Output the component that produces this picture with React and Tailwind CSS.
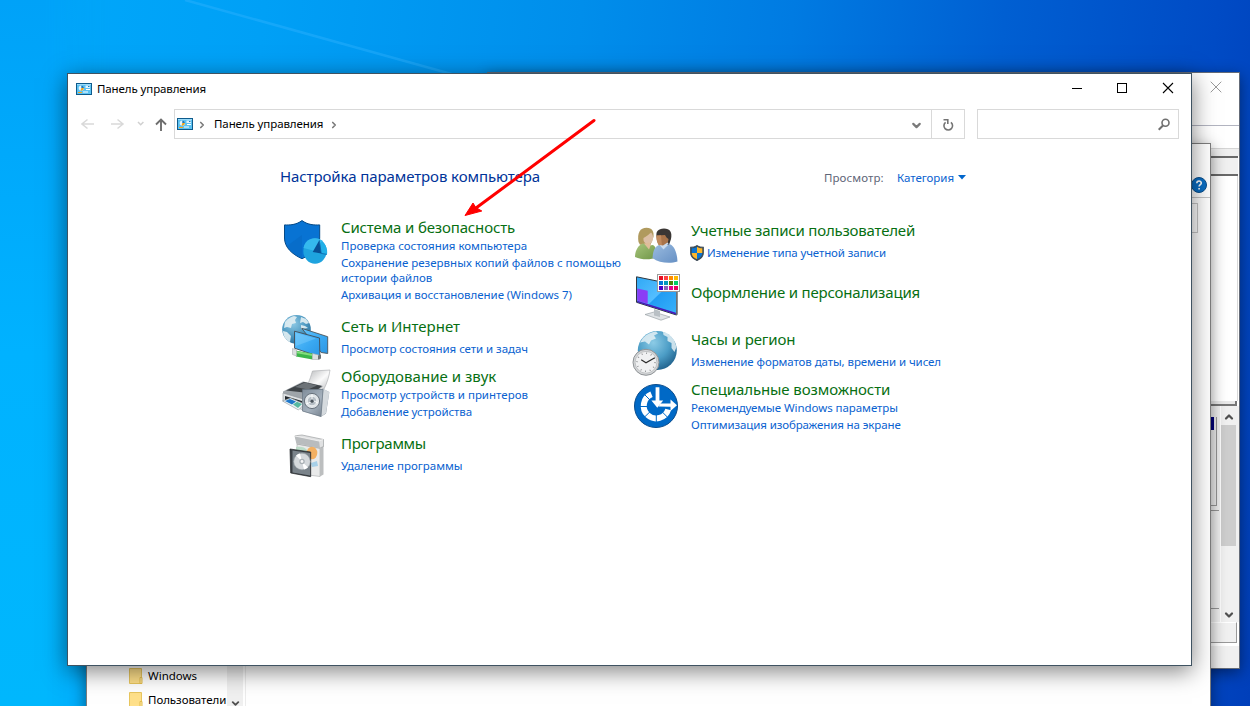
import { ChevronDown, ChevronUp, ChevronRight } from "lucide-react";

function PanelGlyph() {
  return (
    <svg width="16" height="12" viewBox="0 0 16 12" className="shrink-0">
      <rect x=".5" y=".5" width="15" height="11" fill="#5cc2f2" stroke="#0e5b8c" />
      <path d="M1 1h14v1H1z" fill="#9bdcfa" />
      <circle cx="5.300" cy="5" r="2.600" fill="#e8f6fd" />
      <path d="M5.300 5V2.400A2.600 2.600 0 0 1 7.900 5z" fill="#1878c0" />
      <path d="M5.300 5H7.900A2.600 2.600 0 0 1 4.500 7.500z" fill="#f2a41f" />
      <path d="M9.500 2.500h4.500v2.500h-4.500z" fill="#dff2fc" />
      <path d="M12 3h1.500v1H12z" fill="#1878c0" />
      <path d="M10 6h4v1h-4zM7 8.500h5v1H7z" fill="#fff" />
      <path d="M2 9h4v1H2z" fill="#f5a623" />
    </svg>
  );
}

function SecurityIcon() {
  return (
    <svg width="48" height="48" viewBox="0 0 48 48">
      <path d="M21 2.6C15 6.9 9 7.2 3.5 6.9V20c0 9 7 16 17.5 20.7C31.5 36 38.7 29 38.7 20V6.9C33 7.2 27 6.9 21 2.6z" fill="#0873d3" stroke="#074a86" strokeWidth="1" />
      <path d="M6 28c3.5 5.500 8.500 9.500 15 12.700V17z" fill="#0667c2" opacity=".5" />
      <ellipse cx="34" cy="33" rx="11.700" ry="12.700" fill="#1ea3df" />
      <path d="M22.500 30c1-6 5.500-9.700 11.500-9.700 3 0 5.500 1 7.500 3L34 33z" fill="#35b9ee" />
      <path d="M40.500 23.500L34 34.500l12 2c.8-5-1-10-5.500-13z" fill="#22b0e8" />
      <path d="M38.300 22.300L31.700 34l8.500 1.400z" fill="#084f96" />
      <path d="M38.300 22.300L40.200 35.400l5.700 1" fill="none" stroke="#0a64a8" strokeWidth=".8" />
    </svg>
  );
}

function NetworkIcon() {
  return (
    <svg width="48" height="48" viewBox="0 0 48 48">
      <defs>
        <radialGradient id="netGlobe" cx=".4" cy=".3" r=".75">
          <stop offset="0" stopColor="#8cc8e4" />
          <stop offset=".6" stopColor="#4a96bf" />
          <stop offset="1" stopColor="#2c6c95" />
        </radialGradient>
        <linearGradient id="netScreen" x1="0" y1="0" x2="1" y2="1">
          <stop offset="0" stopColor="#62c2fa" />
          <stop offset=".55" stopColor="#3aa9f2" />
          <stop offset="1" stopColor="#2b96e5" />
        </linearGradient>
      </defs>
      <circle cx="15.500" cy="15.300" r="14.300" fill="url(#netGlobe)" />
      <path d="M4 8c3-4 6-5 9-6l3 1-2 3 1 3-4 1-1 4-4-1-3 1zM2 17l4 1 4 4-1 6C5 26 2 22 2 17zM20 3l5 2 3 4-3 1-3-2-3 1zM20 11l4 1 3 2-7 1z" fill="#e3eff3" opacity=".9" />
      <path d="M20.700 14.300L46.700 22.700V39.500l-6.500-1z" fill="url(#netScreen)" stroke="#4b5358" strokeWidth=".9" />
      <path d="M13.500 17.200l25 6.800.4 18.800-25.400-8.600z" fill="url(#netScreen)" stroke="#454c52" strokeWidth=".9" />
      <path d="M15 19l20 5.500L15 32z" fill="#90d8ff" opacity=".35" />
      <path d="M14 36.500l17.500 3v6L15 42.500z" fill="#3bb54a" />
      <path d="M14.500 37l17 3v2l-17-3z" fill="#83dc7c" />
      <path d="M11.500 34.500l4 1.500v6l-4-1.500zM31.500 39.500l6 1.500c2 .5 2.500 3 1 4.500l-7 0z" fill="#dce0e0" stroke="#a9afb1" strokeWidth=".6" />
      <path d="M37 41.500l3-1v4l-3 1z" fill="#6b7174" />
    </svg>
  );
}

function HardwareIcon() {
  return (
    <svg width="50" height="50" viewBox="0 0 50 50">
      <defs>
        <linearGradient id="hwPaper" x1="0" y1="0" x2="1" y2="1">
          <stop offset="0" stopColor="#b8babc" />
          <stop offset=".55" stopColor="#fbfbfb" />
          <stop offset="1" stopColor="#c0c2c4" />
        </linearGradient>
        <linearGradient id="hwBox" x1="0" y1="0" x2="1" y2="1">
          <stop offset="0" stopColor="#7f8c99" />
          <stop offset=".5" stopColor="#a5b1bd" />
          <stop offset="1" stopColor="#66727f" />
        </linearGradient>
      </defs>
      <path d="M27 14.500c2-4 3-8 4.500-12.500L49 1c-1 7-3 13-6 19z" fill="url(#hwPaper)" stroke="#a8aaac" strokeWidth=".6" />
      <path d="M2 22.500l20-10 20 4.500-9 9-12 9L2 26z" fill="#9fa5aa" />
      <path d="M5 21.500l18-8.500 18 4-9 7.500z" fill="#3f4448" />
      <path d="M14 18l10-4.500 12 3-9 4z" fill="#6d7378" />
      <path d="M2 24l20 6v11L2 32z" fill="#dfe2e4" stroke="#8c9195" strokeWidth=".6" />
      <path d="M4 27l17 5v4.500L4 31z" fill="#23282d" />
      <path d="M1.500 32l8-3 14 6-6 6z" fill="#eef2f4" stroke="#8f979c" strokeWidth=".6" />
      <path d="M4 32l5-2 6 2.600-4 3z" fill="#1f77c9" />
      <path d="M12 35.500l4-2.700 5 2.200-4 4z" fill="#58b8a0" />
      <path d="M21.500 20.500l21-.5 5.800 3-.2 2-3.100 19.500-5 3.200-18.500-5.500z" fill="url(#hwBox)" />
      <path d="M42.500 20l5.800 3.300-3.300 21-5 3.400z" fill="#d5dade" />
      <path d="M21.500 20.500h20.500l-2 27-18.500-5.500z" fill="none" stroke="#687683" strokeWidth=".7" />
      <circle cx="31" cy="32" r="7.600" fill="#dfe4e8" stroke="#69737d" />
      <circle cx="31" cy="32" r="4.800" fill="#b6bec5" stroke="#f5f7f8" strokeWidth=".8" />
      <path d="M31 25.500v5M25 35l5-2M37 34l-4-2" stroke="#fff" strokeWidth=".9" />
      <circle cx="31" cy="32.200" r="1.600" fill="#4c555d" />
    </svg>
  );
}

function ProgramsIcon() {
  return (
    <svg width="48" height="48" viewBox="0 0 48 48">
      <path d="M16 11l23 4.500V43.500l-23-3z" fill="#e9eaea" stroke="#b3b5b6" strokeWidth=".7" />
      <path d="M39 15.500l3.500-3v29l-3.500 2z" fill="#bcbebf" />
      <path d="M14 2.800l7-.8 21.500 4.500v7l-3.500 1.500-23-4-1-4z" fill="#e0e1e2" stroke="#9fa2a4" strokeWidth=".7" />
      <path d="M14 3l24 5 1 7-23-4.500z" fill="#b9bcbe" />
      <path d="M14 3l24 5 4-1.500" fill="none" stroke="#f5f5f5" strokeWidth=".8" />
      <path d="M15 14c5-1 9 0 11 3v8h-11z" fill="#bcdcc8" />
      <ellipse cx="31" cy="20" rx="5.300" ry="6.300" fill="#f3b062" />
      <path d="M30 30l6-2 1 5-6 1z" fill="#a7d0e8" />
      <path d="M9 16l20.700 3V43.700L9.700 40z" fill="#3a3f44" stroke="#22262a" strokeWidth=".7" />
      <path d="M11.500 17.500l17.500 2.500v22.500l-17.500-3z" fill="#7a838a" />
      <circle cx="21" cy="28.500" r="8.300" fill="#d5d9dc" stroke="#9ba2a7" strokeWidth=".5" />
      <path d="M21 28.500L15 22.500a8.500 8.500 0 0 1 4-2zM21 28.500l6 6a8.500 8.500 0 0 1-4 2z" fill="#fff" />
      <circle cx="21" cy="28.500" r="2.700" fill="#a9b0b5" />
      <circle cx="21" cy="28.500" r="1.400" fill="#f6f6f6" />
    </svg>
  );
}

function UsersIcon() {
  return (
    <svg width="48" height="48" viewBox="0 0 48 48">
      <defs>
        <linearGradient id="userGreen" x1="0" y1="0" x2="1" y2="1">
          <stop offset="0" stopColor="#a7c57c" />
          <stop offset="1" stopColor="#6f9547" />
        </linearGradient>
        <linearGradient id="userBlue" x1="0" y1="0" x2="1" y2="1">
          <stop offset="0" stopColor="#9bbce0" />
          <stop offset="1" stopColor="#6690c4" />
        </linearGradient>
      </defs>
      <path d="M6.500 21C5 12 8 6.800 14.500 6.800c6 0 7.500 4 7 9l-3 8H8z" fill="#b09a5e" />
      <path d="M11.500 17c2-1 6-4 7.500-5.500 1.500 1.500 2.500 4 2 6.500-.5 3-2 5-4.500 5-3.500 0-5.500-2.500-5-6z" fill="#dcbfa6" />
      <path d="M3 36c0-6 3-12 8-13.500l6 2 4-.5c3 1.500 4 7 4 12.500-7 2.500-15 2.500-22-.5z" fill="url(#userGreen)" />
      <path d="M12 22.500l5 6 2-5-1.500-2z" fill="#dfbd9a" />
      <path d="M25 17c-2-6 1-9.500 7-9.500 6 0 8.500 4 7 10.500l-2 6H27z" fill="#3a3634" />
      <path d="M24.500 14.500c3 0 6-.2 8.500-.5 1 2 2 3 3.500 4-.5 5-3 8.500-6 8.500-3.500 0-6.500-6-6-12z" fill="#a9744a" />
      <path d="M24.500 14.500c1.500 0 3 0 4.500-.2L30 26c-3-.5-6-6-5.500-11.500z" fill="#c08a5e" />
      <path d="M20.500 37c.5-6 1.500-11 6.500-13l5 3.500 5-4.500c5 1 8 8 8.500 17.500C38 43 27 42 20.500 37z" fill="url(#userBlue)" />
      <path d="M27.500 24l4 4.500 5-6-1-1-4.500 3z" fill="#c9dcf0" />
    </svg>
  );
}

function DisplayIcon() {
  return (
    <svg width="49" height="48" viewBox="0 0 49 48">
      <defs>
        <linearGradient id="dispBlue" x1="0" y1="0" x2="1" y2="1">
          <stop offset="0" stopColor="#2fa8f5" />
          <stop offset=".5" stopColor="#54beff" />
          <stop offset=".52" stopColor="#229cf3" />
          <stop offset="1" stopColor="#38b2fa" />
        </linearGradient>
      </defs>
      <path d="M13 41.500l9-2.500 16 5-9 3.200z" fill="#dfe3e6" stroke="#8f979c" strokeWidth=".6" />
      <path d="M22 36l6 2v6l-6-1.500z" fill="#b9c0c5" />
      <path d="M4.500 3.800L44.500 12v30L4.500 29.300z" fill="url(#dispBlue)" stroke="#30383f" strokeWidth="1" />
      <path d="M44 12l1.800-.5v30L44.200 42.500z" fill="#70787e" />
      <path d="M5.200 15.500l10.500 2.300v13L5.200 27.500z" fill="#8a3df5" />
      <path d="M5.200 27.800l38.700 12v1.600L5.200 29.200z" fill="#4a16b8" />
      <rect x="25.500" y="1.500" width="22" height="17" fill="#fff" stroke="#9b9b9b" />
      <path d="M27 3h4v4h-4z" fill="#e81123" /><path d="M32 3h4v4h-4z" fill="#ff4343" /><path d="M37 3h4v4h-4z" fill="#ff8c00" /><path d="M42 3h4v4h-4z" fill="#ffb900" />
      <path d="M27 8h4v4h-4z" fill="#0078d7" /><path d="M32 8h4v4h-4z" fill="#0099bc" /><path d="M37 8h4v4h-4z" fill="#498205" /><path d="M42 8h4v4h-4z" fill="#00cc6a" />
      <path d="M27 13h4v4h-4z" fill="#4a00c8" /><path d="M32 13h4v4h-4z" fill="#8764b8" /><path d="M37 13h4v4h-4z" fill="#e3008c" /><path d="M42 13h4v4h-4z" fill="#ea005e" />
    </svg>
  );
}

function ClockIcon() {
  return (
    <svg width="48" height="48" viewBox="0 0 48 48">
      <defs>
        <radialGradient id="clkGlobe" cx=".4" cy=".3" r=".75">
          <stop offset="0" stopColor="#8ccbe6" />
          <stop offset=".55" stopColor="#4c9dc6" />
          <stop offset="1" stopColor="#1f5f8a" />
        </radialGradient>
      </defs>
      <circle cx="25.300" cy="21.500" r="19.500" fill="url(#clkGlobe)" />
      <path d="M11 9c4-4 8-6 13-6.500l2 2-4 2 2 3-5 2-2 4-4-3-5 1zM31 3c4 .5 8 3.500 11 8l2.500 7-2 5-3-4v-5l-4-2 0-4-4-2z" fill="#e4f0f4" opacity=".85" />
      <circle cx="14" cy="33.300" r="13" fill="#d3d5d7" stroke="#8f9396" strokeWidth="1" />
      <circle cx="14" cy="33.300" r="10.900" fill="#f0f1f2" stroke="#b0b3b5" strokeWidth=".7" />
      <circle cx="14" cy="33.300" r="9" fill="none" stroke="#808385" strokeWidth="1.500" strokeDasharray=".8 3.912" />
      <path d="M9.200 30.800l4.800 2.900 8.800-4.900" fill="none" stroke="#2b2b2b" strokeWidth="1.200" />
    </svg>
  );
}

function AccessIcon() {
  return (
    <svg width="48" height="48" viewBox="0 0 48 48">
      <circle cx="24" cy="24" r="21.500" fill="#0069c6" stroke="#0a4c8c" strokeWidth="1" />
      <path d="M19.500 12.300A12.500 12.500 0 1 0 36.200 27.500" fill="none" stroke="#fff" strokeWidth="6" />
      <path d="M18.500 18.500L12 12M15.500 24.500H6.500M18.300 29.500L11 36.500M24.300 31v9.500M29.800 29.500l7 7" stroke="#0069c6" strokeWidth="1" />
      <path d="M24 5h4v13.500h3l-5 7.200-6.500-7.200H24z" fill="#0069c6" stroke="#0069c6" strokeWidth="2.500" />
      <path d="M23.600 5.200h3.800v13.300h3.800l-5.900 7.200-5.900-7.200h4.200z" fill="#fff" />
      <path d="M26.500 24.400l2-2.800h10v-4.200l6.500 5.800-6.500 5.800v-4.200z" fill="#fff" />
    </svg>
  );
}

function UacShield() {
  return (
    <svg width="14" height="16" viewBox="0 0 14 16" className="mr-[3px] shrink-0">
      <path d="M7 .6C5 2 2.800 2.300.7 2.300v5.500C.7 11.500 3.500 14 7 15.400c3.500-1.400 6.300-3.900 6.300-7.600V2.300C11.200 2.300 9 2 7 .6z" fill="#3b4a55" stroke="#3b4a55" strokeWidth="1.100" />
      <path d="M7 1.700C5.500 2.700 3.500 3.200 1.700 3.300V8H7z" fill="#0b74d1" />
      <path d="M7 1.700c1.500 1 3.500 1.500 5.300 1.600V8H7z" fill="#fcb72b" />
      <path d="M1.700 8H7v6.300C4 13 1.800 11 1.700 8z" fill="#fcb72b" />
      <path d="M12.300 8H7v6.300c3-1.300 5.200-3.300 5.300-6.300z" fill="#0b74d1" />
    </svg>
  );
}

const leftColumn = [
  {
    title: "Система и безопасность", track: "tracking-[-0.15px]", size: "h-[99px]", gap: "mt-px", lift: "mt-px", icon: <SecurityIcon />,
    links: [
      { text: "Проверка состояния компьютера", track: "tracking-[-0.02px]" },
      { text: "Сохранение резервных копий файлов с помощью истории файлов", track: "tracking-[0.01px]" },
      { text: "Архивация и восстановление (Windows 7)", track: "tracking-[-0.05px]" },
    ],
  },
  {
    title: "Сеть и Интернет", track: "tracking-normal", size: "h-[50px]", gap: "mt-[5px]", lift: "-mt-0.5", icon: <NetworkIcon />,
    links: [{ text: "Просмотр состояния сети и задач", track: "tracking-[-0.06px]" }],
  },
  {
    title: "Оборудование и звук", track: "tracking-[0.03px]", size: "h-[67px]", gap: "mt-px", lift: "mt-[3px]", icon: <HardwareIcon />,
    links: [
      { text: "Просмотр устройств и принтеров", track: "tracking-normal" },
      { text: "Добавление устройства", track: "tracking-[-0.09px]" },
    ],
  },
  {
    title: "Программы", track: "tracking-[-0.28px]", size: "h-[50px]", gap: "mt-[5px]", lift: "mt-0", icon: <ProgramsIcon />,
    links: [{ text: "Удаление программы", track: "tracking-normal" }],
  },
];

const rightColumn = [
  {
    title: "Учетные записи пользователей", track: "tracking-[-0.2px]", size: "h-[62px]", gap: "mt-[5px]", lift: "mt-px", icon: <UsersIcon />,
    links: [{ text: "Изменение типа учетной записи", track: "tracking-[-0.12px]", shield: true }],
  },
  {
    title: "Оформление и персонализация", track: "tracking-[-0.19px]", size: "h-[47px]", gap: "mt-0", lift: "-mt-[9px]", icon: <DisplayIcon />,
    links: [],
  },
  {
    title: "Часы и регион", track: "tracking-[-0.1px]", size: "h-[50px]", gap: "mt-[5px]", lift: "mt-0", icon: <ClockIcon />,
    links: [{ text: "Изменение форматов даты, времени и чисел", track: "tracking-[-0.09px]" }],
  },
  {
    title: "Специальные возможности", track: "tracking-[-0.1px]", size: "h-[67px]", gap: "mt-px", lift: "mt-[3px]", icon: <AccessIcon />,
    links: [
      { text: "Рекомендуемые Windows параметры", track: "tracking-[-0.06px]" },
      { text: "Оптимизация изображения на экране", track: "tracking-[-0.11px]" },
    ],
  },
];

function Category({ item, iconSlot }) {
  return (
    <section className={`flex ${item.size}`}>
      <div className={`${iconSlot} shrink-0 ${item.lift}`}>{item.icon}</div>
      <div className="flex w-[290px] flex-col">
        <h2 className={`text-[15px] leading-5 whitespace-nowrap text-[#076f12] ${item.track}`}>{item.title}</h2>
        <div className={`flex flex-col gap-0.5 text-[11.5px] leading-[15px] text-[#0a62d0] ${item.gap}`}>
          {item.links.map((l) => (
            <a key={l.text} className={`flex items-center ${l.shield ? "-ml-px h-[15px]" : ""} ${l.track}`}>
              {l.shield && <UacShield />}
              {l.text}
            </a>
          ))}
        </div>
      </div>
    </section>
  );
}

function ConsoleWindow() {
  return (
    <div className="absolute top-[72px] left-[487px] flex h-[597px] w-[753px] flex-col border border-[#646b78] bg-white shadow-[0_4px_14px_rgba(0,0,0,.45)]">
      <div className="flex h-[53px] justify-end border-b border-[#b2b4c0] pt-2 pr-[17px]">
        <svg width="12" height="12" viewBox="0 0 12 12"><path d="M.7.7l10.600 10.600M11.300.7L.7 11.300" stroke="#999" fill="none" /></svg>
      </div>
      <div className="h-[22px]" />
      <div className="h-2 border-t border-[#d5d5d5] bg-[#efefef]" />
      <div className="mr-px h-5 border-t-2 border-b-2 border-[#696969] bg-[#f0f0f0]" />
      <div className="mr-px flex-1 border-r border-[#d8d8d8] bg-white" />
      <div className="mr-0.5 h-[5px] border-r-2 border-b-2 border-[#777] bg-[#e9e9e9]" />
      <div className="flex h-[216px] justify-end bg-[#f0f0f0] pr-[3px]">
        <div className="flex flex-1 flex-col">
          <div className="mt-[11px] flex h-[89px] border-r border-b border-[#999]">
            <div className="mr-0.5 flex flex-1 flex-col">
              <div className="h-[13px] bg-[#00007b]" />
              <div className="mt-1 mr-[3px] flex-1 border-t border-r border-[#999] border-r-white bg-[#ebebeb]" />
            </div>
          </div>
          <div className="mr-[-2px] mt-1 h-[99px] border-t border-b border-[#999]" />
        </div>
        <div className="ml-[3px] flex w-[16px] flex-col items-center border-l border-white bg-[#f0f0f0]">
          <ChevronUp size={12} strokeWidth={4.5} color="#505050" className="mt-[5px] mb-0.5" />
          <div className="h-[121px] w-[15px] bg-[#cdcdcd]" />
          <ChevronDown size={12} strokeWidth={4.5} color="#505050" className="mt-auto mb-px" />
        </div>
      </div>
      <div className="mr-0.5 h-[21px] border-t border-r border-b border-[#999] border-t-white bg-[#f0f0f0]" />
      <div className="mt-0.5 h-[23px] border-t border-white bg-[#f0f0f0]" />
    </div>
  );
}

function FolderGlyph() {
  return (
    <svg width="14" height="16" viewBox="0 0 14 16" className="mr-[5px]">
      <path d="M.5.500h12v15H.5z" fill="#ffe08a" stroke="#e8c65e" />
      <path d="M11 9.500h2v6h-2z" fill="#ffe9a8" stroke="#e3bd4c" />
    </svg>
  );
}

function ExplorerWindow() {
  return (
    <div className="absolute top-[143px] left-[86px] flex h-[593px] w-[1125px] border border-[#7d7d7d] bg-white shadow-[0_4px_14px_rgba(0,0,0,.45)]">
      <div className="flex w-[157px] flex-col pt-[524px] pl-[42px] text-[11.5px] text-black">
        <div className="mb-2 flex h-4 items-center">
          <FolderGlyph />Windows
        </div>
        <div className="flex h-4 items-center whitespace-nowrap tracking-[-0.05px]">
          <FolderGlyph />Пользователи
        </div>
      </div>
      <div className="-ml-[17px] flex w-4 items-end justify-center bg-[#f0f0f0] pb-[26px]">
        <ChevronDown size={11} strokeWidth={4} color="#505050" />
      </div>
      <div className="ml-0.5 flex flex-1 flex-col border-l border-[#ececec]">
        <div className="flex h-[54px] items-end justify-end border-b border-[#c4c4c4] pr-[3px] pb-1">
          <svg width="16" height="16" viewBox="0 0 16 16">
            <circle cx="8" cy="8" r="7.500" fill="#0a6ec4" stroke="#0b4f8c" />
            <path d="M5.800 6.300c0-3 4.500-3 4.500-.2 0 1.600-2.200 1.700-2.200 3.500M8.100 11v1.600" fill="none" stroke="#fff" strokeWidth="1.600" />
          </svg>
        </div>
        <div className="mt-[5px] mr-3 h-[30px] border border-[#c8c8c8]" />
      </div>
    </div>
  );
}

function TitleBar() {
  return (
    <div className="flex h-[30px] items-center pr-[17px] pl-2">
      <PanelGlyph />
      <span className="ml-[5px] flex-1 text-[11.5px] tracking-[-0.1px] text-black">Панель управления</span>
      <svg width="102" height="12" viewBox="0 0 102 12" shapeRendering="crispEdges" fill="none" stroke="#000" className="-mt-0.5">
        <path d="M0 6.500h10M45.500 1.500h9v9h-9z" />
        <path d="M91 1l10 10M101 1L91 11" shapeRendering="auto" strokeWidth="1.100" />
      </svg>
    </div>
  );
}

function AddressRow() {
  return (
    <div className="mt-[5px] flex h-[30px]">
      <div className="flex w-[106px] items-center pl-[13px]">
        <svg width="88" height="14" viewBox="0 0 88 14" fill="none">
          <path d="M6.500 2.500L1 7l5.500 4.500M1 7h12" stroke="#d9d9d9" strokeWidth="1.500" />
          <path d="M36.500 2.500L42 7l-5.500 4.500M42 7H30" stroke="#d9d9d9" strokeWidth="1.500" />
          <path d="M57 5l2.700 2.700L62.400 5" stroke="#d0d0d0" strokeWidth="1.500" />
          <path d="M75 7.500L80 2.500l5 5M80 2.500V14" stroke="#6e6e6e" strokeWidth="1.900" />
        </svg>
      </div>
      <div className="flex w-[791px] border border-[#d9d9d9]">
        <div className="flex flex-1 items-center pb-px pl-0.5">
          <PanelGlyph />
          <ChevronRight size={10} strokeWidth={4} color="#7a7a7a" className="ml-1 mt-0.5" />
          <span className="ml-[7px] text-[11.5px] tracking-[-0.09px] text-black">Панель управления</span>
          <ChevronRight size={10} strokeWidth={4} color="#7a7a7a" className="ml-1.5 mt-0.5" />
          <ChevronDown size={13} strokeWidth={4} color="#7a7a7a" className="mt-1 mr-2 ml-auto" />
        </div>
        <div className="flex w-[33px] items-center justify-center border-l border-[#d9d9d9]">
          <svg width="12" height="13" viewBox="0 0 12 13" fill="none" stroke="#747474" strokeWidth="1.600">
            <path d="M3.600 4.300a4.300 4.300 0 1 0 5.300 0" />
            <path d="M1.500 1.800h4.300v4.200" />
          </svg>
        </div>
      </div>
      <div className="ml-3 flex w-[202px] items-center justify-end border border-[#d9d9d9] pr-2">
        <svg width="12" height="13" viewBox="0 0 12 13" fill="none" stroke="#707070">
          <circle cx="7.500" cy="4.800" r="3.500" strokeWidth="1.600" />
          <path d="M5 7.500L.7 11.800" strokeWidth="2" />
        </svg>
      </div>
    </div>
  );
}

function ControlPanelWindow() {
  return (
    <div className="absolute top-[73px] left-[67px] flex h-[593px] w-[1125px] flex-col border border-[#3f5362] bg-white shadow-[0_5px_22px_rgba(0,0,0,.5)]">
      <TitleBar />
      <AddressRow />
      <div className="mt-[27px] flex h-5 items-center pl-[212px]">
        <h1 className="w-[544px] text-[15px] tracking-[-0.09px] text-[#003399]">Настройка параметров компьютера</h1>
        <span className="mt-[3px] w-[73px] text-[11.5px] tracking-[0.1px] text-[#5f6678]">Просмотр:</span>
        <button className="mt-[3px] flex items-center text-[11.5px] tracking-[-0.05px] text-[#0a62d0]">
          Категория
          <svg width="8" height="5" viewBox="0 0 8 5" className="-mt-px ml-1"><path d="M0 0h8L4 4.500z" fill="#0066cc" /></svg>
        </button>
      </div>
      <div className="mt-[31px] flex pl-[213px]">
        <div className="flex w-[351px] flex-col">
          {leftColumn.map((item) => <Category key={item.title} item={item} iconSlot="w-[60px]" />)}
        </div>
        <div className="mt-[3px] flex flex-col">
          {rightColumn.map((item) => <Category key={item.title} item={item} iconSlot="w-[59px]" />)}
        </div>
      </div>
    </div>
  );
}

export default function App() {
  return (
    <main className="relative h-[706px] w-[1250px] overflow-hidden bg-[linear-gradient(96deg,#00a9fb_0%,#00a0f6_20%,#008eeb_44%,#007be2_60%,#005fd2_76%,#004bc5_92%,#003fba_100%)] font-['Noto_Sans','Open_Sans',sans-serif]">
      <div className="absolute inset-y-0 left-0 w-[110px] bg-linear-to-b from-[#00a2f8] via-[#00b2ff] to-[#00b7fd] mask-r-from-40%" />
      <svg width="1250" height="706" viewBox="0 0 1250 706" className="absolute inset-0">
        <path d="M185 0L455 75" stroke="#35b4ff" strokeWidth="2.500" opacity=".4" />
      </svg>
      <ConsoleWindow />
      <ExplorerWindow />
      <ControlPanelWindow />
      <svg width="140" height="104" viewBox="0 0 140 104" className="absolute top-[116px] left-[462px]">
        <path d="M132 4.500L14 92" stroke="#f00" strokeWidth="3" strokeLinecap="round" />
        <path d="M3 99.500L11 87l2.800 4.500 6 3.500z" fill="#f00" stroke="#f00" strokeWidth="1" />
      </svg>
    </main>
  );
}
